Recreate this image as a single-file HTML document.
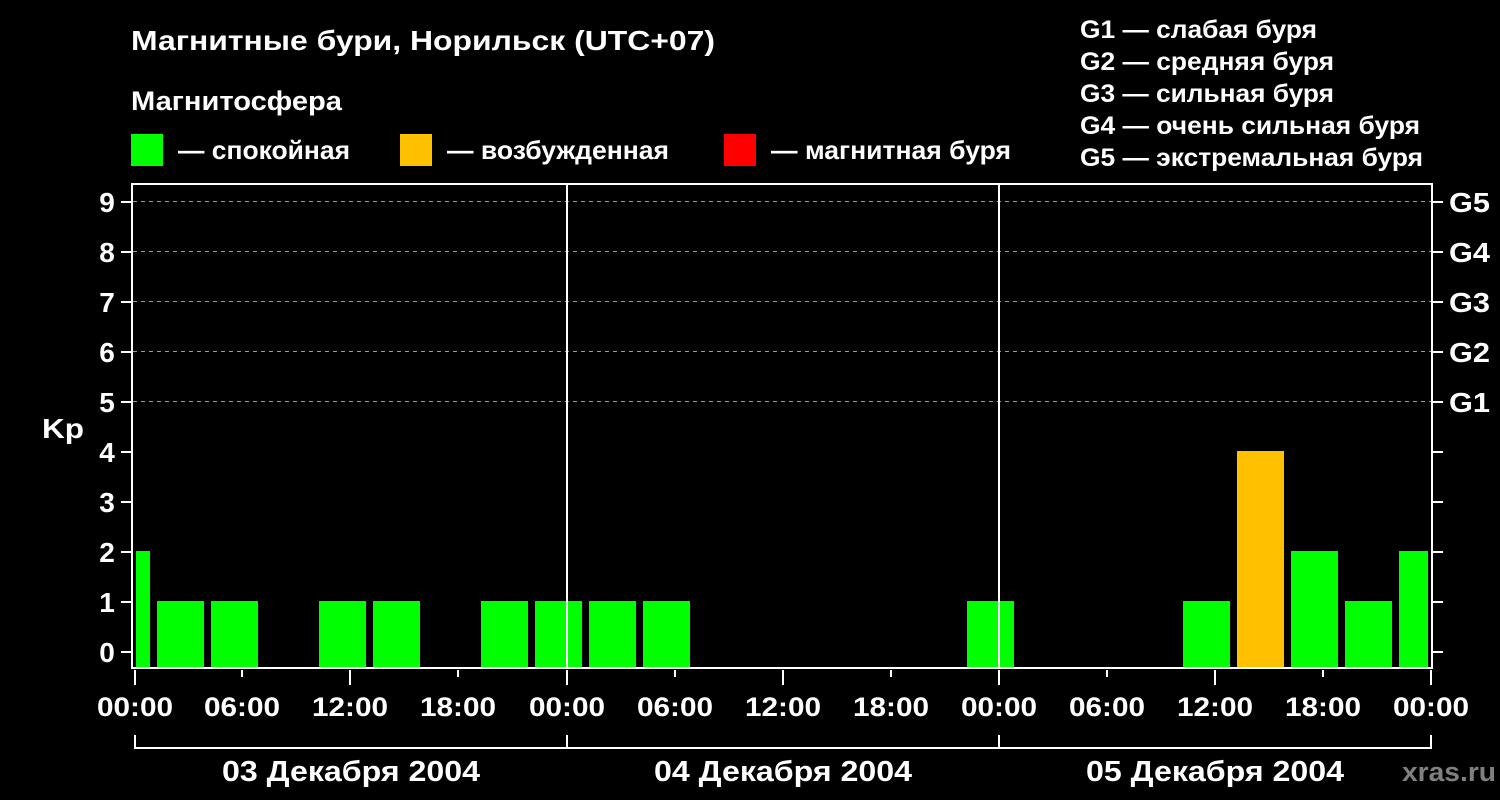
<!DOCTYPE html>
<html><head><meta charset="utf-8"><style>
html,body{margin:0;padding:0;background:#000;width:1500px;height:800px;overflow:hidden}
svg{display:block}
text{font-family:"Liberation Sans",sans-serif;font-weight:bold;fill:#fff}
</style></head><body>
<svg width="1500" height="800" viewBox="0 0 1500 800">
<rect width="1500" height="800" fill="#000"/>
<text x="131" y="50" font-size="28" textLength="584" lengthAdjust="spacingAndGlyphs">Магнитные бури, Норильск (UTC+07)</text>
<text x="131" y="110" font-size="27" textLength="211" lengthAdjust="spacingAndGlyphs">Магнитосфера</text>
<rect x="131" y="134" width="32" height="32" fill="#00ff00"/>
<text x="178" y="159" font-size="26" textLength="172" lengthAdjust="spacingAndGlyphs">— спокойная</text>
<rect x="400" y="134" width="32" height="32" fill="#ffc000"/>
<text x="447" y="159" font-size="26" textLength="222" lengthAdjust="spacingAndGlyphs">— возбужденная</text>
<rect x="724" y="134" width="32" height="32" fill="#ff0000"/>
<text x="771" y="159" font-size="26" textLength="240" lengthAdjust="spacingAndGlyphs">— магнитная буря</text>
<g font-size="25">
<text x="1080" y="38" textLength="237" lengthAdjust="spacingAndGlyphs">G1 — слабая буря</text>
<text x="1080" y="70" textLength="254" lengthAdjust="spacingAndGlyphs">G2 — средняя буря</text>
<text x="1080" y="102" textLength="254" lengthAdjust="spacingAndGlyphs">G3 — сильная буря</text>
<text x="1080" y="134" textLength="340" lengthAdjust="spacingAndGlyphs">G4 — очень сильная буря</text>
<text x="1080" y="166" textLength="343" lengthAdjust="spacingAndGlyphs">G5 — экстремальная буря</text>
</g>
<g stroke="#999" stroke-width="1" stroke-dasharray="4,4">
<line x1="133" y1="201.5" x2="1431" y2="201.5"/>
<line x1="133" y1="251.5" x2="1431" y2="251.5"/>
<line x1="133" y1="301.5" x2="1431" y2="301.5"/>
<line x1="133" y1="351.5" x2="1431" y2="351.5"/>
<line x1="133" y1="401.5" x2="1431" y2="401.5"/>
</g>
<g fill="#00ff00">
<rect x="136" y="551" width="14" height="117"/>
<rect x="157" y="601" width="47" height="67"/>
<rect x="211" y="601" width="47" height="67"/>
<rect x="319" y="601" width="47" height="67"/>
<rect x="373" y="601" width="47" height="67"/>
<rect x="481" y="601" width="47" height="67"/>
<rect x="535" y="601" width="47" height="67"/>
<rect x="589" y="601" width="47" height="67"/>
<rect x="643" y="601" width="47" height="67"/>
<rect x="967" y="601" width="47" height="67"/>
<rect x="1183" y="601" width="47" height="67"/>
<rect x="1291" y="551" width="47" height="117"/>
<rect x="1345" y="601" width="47" height="67"/>
<rect x="1399" y="551" width="29" height="117"/>
</g>
<rect x="1237" y="451" width="47" height="217" fill="#ffc000"/>
<g stroke="#fff" stroke-width="2" fill="none">
<rect x="132" y="184" width="1300" height="484"/>
<line x1="567" y1="184" x2="567" y2="668"/>
<line x1="999" y1="184" x2="999" y2="668"/>
</g>
<g stroke="#fff" stroke-width="2" fill="none">
<path d="M121 202H132M121 252H132M121 302H132M121 352H132M121 402H132M121 452H132M121 502H132M121 552H132M121 602H132M121 652H132"/>
<path d="M1432 202H1443M1432 252H1443M1432 302H1443M1432 352H1443M1432 402H1443M1432 452H1443M1432 502H1443M1432 552H1443M1432 602H1443M1432 652H1443"/>
<path d="M135 670V685M242 670V677M350 670V685M458 670V677M567 670V685M675 670V677M783 670V685M891 670V677M999 670V685M1107 670V677M1215 670V685M1323 670V677M1431 670V685"/>
<path d="M135 735V748H1431V735M567 735V748M999 735V748"/>
</g>
<g font-size="28" text-anchor="middle">
<text x="107" y="212">9</text><text x="107" y="262">8</text><text x="107" y="312">7</text>
<text x="107" y="362">6</text><text x="107" y="412">5</text><text x="107" y="462">4</text>
<text x="107" y="512">3</text><text x="107" y="562">2</text><text x="107" y="612">1</text>
<text x="107" y="662">0</text>
</g>
<text x="42" y="438" font-size="28" textLength="42" lengthAdjust="spacingAndGlyphs">Kp</text>
<g font-size="28">
<text x="1449" y="212" textLength="41" lengthAdjust="spacingAndGlyphs">G5</text>
<text x="1449" y="262" textLength="41" lengthAdjust="spacingAndGlyphs">G4</text>
<text x="1449" y="312" textLength="41" lengthAdjust="spacingAndGlyphs">G3</text>
<text x="1449" y="362" textLength="41" lengthAdjust="spacingAndGlyphs">G2</text>
<text x="1449" y="412" textLength="41" lengthAdjust="spacingAndGlyphs">G1</text>
</g>
<g font-size="27">
<text x="97" y="716" textLength="76" lengthAdjust="spacingAndGlyphs">00:00</text>
<text x="204" y="716" textLength="76" lengthAdjust="spacingAndGlyphs">06:00</text>
<text x="312" y="716" textLength="76" lengthAdjust="spacingAndGlyphs">12:00</text>
<text x="420" y="716" textLength="76" lengthAdjust="spacingAndGlyphs">18:00</text>
<text x="529" y="716" textLength="76" lengthAdjust="spacingAndGlyphs">00:00</text>
<text x="637" y="716" textLength="76" lengthAdjust="spacingAndGlyphs">06:00</text>
<text x="745" y="716" textLength="76" lengthAdjust="spacingAndGlyphs">12:00</text>
<text x="853" y="716" textLength="76" lengthAdjust="spacingAndGlyphs">18:00</text>
<text x="961" y="716" textLength="76" lengthAdjust="spacingAndGlyphs">00:00</text>
<text x="1069" y="716" textLength="76" lengthAdjust="spacingAndGlyphs">06:00</text>
<text x="1177" y="716" textLength="76" lengthAdjust="spacingAndGlyphs">12:00</text>
<text x="1285" y="716" textLength="76" lengthAdjust="spacingAndGlyphs">18:00</text>
<text x="1393" y="716" textLength="76" lengthAdjust="spacingAndGlyphs">00:00</text>
</g>
<g font-size="29" text-anchor="middle">
<text x="351" y="781" textLength="258" lengthAdjust="spacingAndGlyphs">03 Декабря 2004</text>
<text x="783" y="781" textLength="258" lengthAdjust="spacingAndGlyphs">04 Декабря 2004</text>
<text x="1215" y="781" textLength="258" lengthAdjust="spacingAndGlyphs">05 Декабря 2004</text>
</g>
<text x="1402" y="781" font-size="27" textLength="94" lengthAdjust="spacingAndGlyphs" style="fill:#808080">xras.ru</text>
</svg>
</body></html>
